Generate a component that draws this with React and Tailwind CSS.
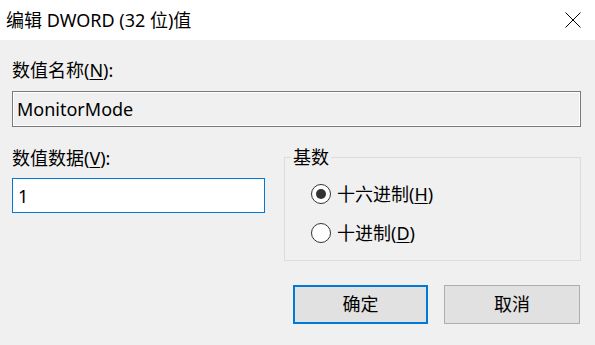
import React, { useState } from "react";

function Radio({ checked, label, mnemonic, onClick }) {
  return (
    <div className="flex items-center gap-[6px] h-[24px] cursor-default" onClick={onClick}>
      <span className="w-[20px] h-[20px] rounded-full border-[1.5px] border-[#333] bg-white flex items-center justify-center">
        {checked && <span className="w-[10px] h-[10px] rounded-full bg-[#333]" />}
      </span>
      <span className="text-[18px] leading-[24px]">
        {label}(<span className="underline underline-offset-2">{mnemonic}</span>)
      </span>
    </div>
  );
}

export default function App() {
  const [hex, setHex] = useState(true);

  return (
    <div className="w-[595px] h-[345px] bg-[#f0f0f0] text-black font-['Noto_Sans','Noto_Sans_CJK_SC',sans-serif] flex flex-col">
      {/* title bar */}
      <div className="h-[40px] bg-white flex items-center justify-between pl-[6px] pr-[14px]">
        <span className="text-[18px] leading-[24px]">编辑 DWORD (32 位)值</span>
        <svg width="16" height="16" viewBox="0 0 16 16" className="text-black">
          <path d="M0.5 0.5 L15.5 15.5 M15.5 0.5 L0.5 15.5" stroke="currentColor" strokeWidth="1" />
        </svg>
      </div>

      <div className="pl-[12px] pr-[14px] pt-[18px] flex flex-col">
        <label className="text-[18px] leading-[24px]">
          数值名称(<span className="underline underline-offset-2">N</span>):
        </label>
        <div className="mt-[9px] h-[36px] border border-[#7a7a7a] shadow-[inset_1px_1px_0_#fff,inset_-1px_-1px_0_#fff] bg-[#f0f0f0] flex items-center px-[4px]">
          <span className="text-[18px]">MonitorMode</span>
        </div>

        <div className="mt-[19px] grid grid-cols-[253px_297px] gap-x-[19px] items-start">
          <div className="flex flex-col">
            <label className="text-[18px] leading-[24px]">
              数值数据(<span className="underline underline-offset-2">V</span>):
            </label>
            <input
              defaultValue="1"
              className="mt-[8px] h-[35px] border border-[#0078d7] bg-white px-[5px] text-[18px] outline-none"
            />
          </div>

          <fieldset className="-mt-[1px] h-[116px] border border-[#dcdcdc] pl-[6px]">
            <legend className="px-[2px] text-[18px] leading-[24px]">基数</legend>
            <div className="pl-[20px] pt-[13px] flex flex-col gap-[15px]">
              <Radio checked={hex} label="十六进制" mnemonic="H" onClick={() => setHex(true)} />
              <Radio checked={!hex} label="十进制" mnemonic="D" onClick={() => setHex(false)} />
            </div>
          </fieldset>
        </div>

        <div className="mt-[24px] flex justify-end gap-[16px] pr-[1px]">
          <button className="w-[135px] h-[39px] border-2 border-[#0078d7] bg-[#e1e1e1] text-[18px]">确定</button>
          <button className="w-[136px] h-[39px] border border-[#adadad] bg-[#e1e1e1] text-[18px]">取消</button>
        </div>
      </div>
    </div>
  );
}
